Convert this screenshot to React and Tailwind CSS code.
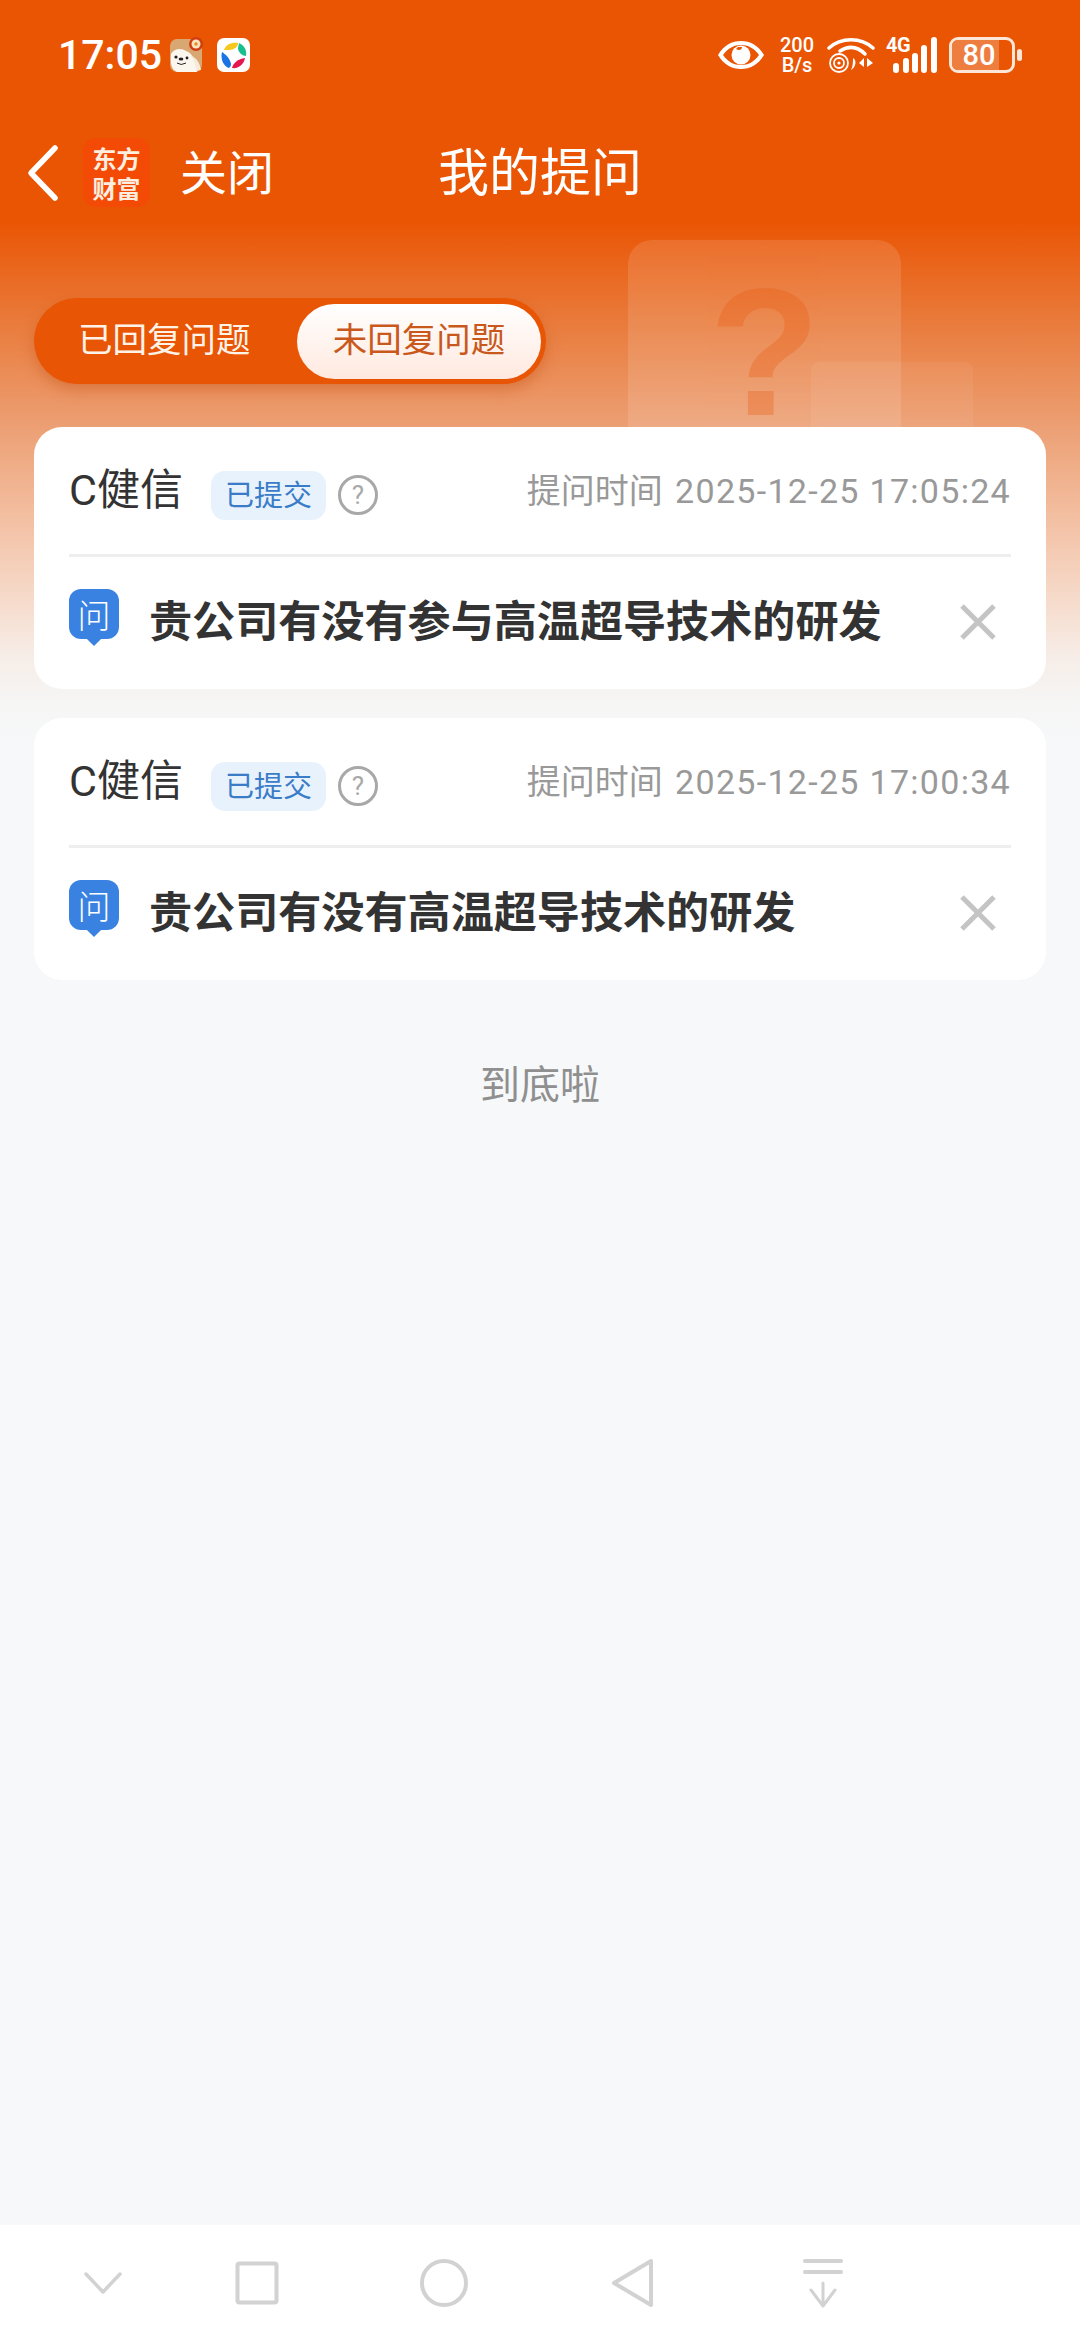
import React from "react";

const CJK = "font-['Roboto','Noto_Sans_CJK_SC',sans-serif]";

function DogIcon() {
  return (
    <svg width="36" height="36" viewBox="0 0 36 36" className="shrink-0">
      <rect x="1" y="2" width="32" height="33" rx="7" fill="#d9a772" />
      <path d="M2 17 C5 11 13 11 17 14 C22 15 27 22 28 35 L8 35 C3 33 1 28 2 17Z" fill="#fbf6ee" />
      <path d="M22 19 C27 20 31 26 32 33 L27 34 C27 28 25 23 22 19Z" fill="#f6ead9" />
      <circle cx="7" cy="20" r="1.6" fill="#222" />
      <circle cx="18" cy="21" r="1.4" fill="#222" />
      <ellipse cx="12" cy="22" rx="2.4" ry="1.5" fill="#222" />
      <path d="M8 26 Q12 29 17 26" stroke="#222" strokeWidth="1" fill="none" />
      <circle cx="27" cy="7" r="7" fill="#cf3f12" />
      <circle cx="27" cy="7" r="4.5" fill="#fbe3bd" />
      <circle cx="27" cy="7" r="1.7" fill="#e88a1f" />
    </svg>
  );
}

function ColorIcon() {
  return (
    <svg width="33" height="34" viewBox="0 0 33 34" className="shrink-0">
      <rect width="33" height="34" rx="7" fill="#fff" />
      <path d="M7 12 C9 6 15 4 21 5 C21 9 17 12 12 12 C10 12 8 12 7 12Z" fill="#f6c81e" />
      <path d="M22 5 C27 7 30 12 29 18 C25 18 21 14 21 10Z" fill="#19c08f" />
      <path d="M5 14 C8 16 13 20 14 26 C14 28 13 29 12 30 C7 29 3 21 5 14Z" fill="#1b74e4" />
      <path d="M15 30 C16 25 21 21 28 20 C27 26 22 31 15 30Z" fill="#e5174f" />
    </svg>
  );
}

function StatusBar() {
  return (
    <div className="flex h-[110px] items-center pl-[58px] pr-[58px] text-white">
      <span className={`${CJK} text-[41px] font-medium leading-none w-[111px]`}>17:05</span>
      <DogIcon />
      <div className="w-[12px]" />
      <ColorIcon />
      <div className="flex-1" />
      <svg width="46" height="30" viewBox="0 0 46 30" className="shrink-0 mr-[15px]">
        <path fillRule="evenodd" d="M0 15 C6 5 14 1 23 1 C32 1 40 5 46 15 C40 25 32 29 23 29 C14 29 6 25 0 15Z M5 15 C10 22 16 25 23 25 C30 25 36 22 41 15 C36 8 30 5 23 5 C16 5 10 8 5 15Z" fill="#fff" />
        <circle cx="23" cy="15" r="9.5" fill="#fff" />
        <path d="M18 9 C21 11 24 10 24 7 L20 7Z" fill="#ea5504" />
      </svg>
      <div className="flex flex-col items-center w-[36px] mr-[12px] font-['Roboto',sans-serif] text-[20px] leading-[20px] font-medium">
        <span>200</span>
        <span>B/s</span>
      </div>
      <svg width="48" height="36" viewBox="0 0 48 36" className="shrink-0 mr-[11px]">
        <path d="M2 11 C14 0 34 0 46 11" stroke="#fff" strokeWidth="3.5" fill="none" strokeLinecap="round" />
        <path d="M13 14 C21 9 30 9 38 17" stroke="#fff" strokeWidth="3.5" fill="none" strokeLinecap="round" />
        <circle cx="12" cy="26" r="9" stroke="#fff" strokeWidth="1.8" fill="none" />
        <circle cx="12" cy="26" r="5" stroke="#fff" strokeWidth="1.8" fill="none" />
        <circle cx="12" cy="26" r="1.6" fill="#fff" />
        <path d="M26 21 C30 23 29 30 24 33 C26 29 26 25 26 21Z" fill="#fff" />
        <path d="M37 21 L37 30 L32 26Z M40 21 L40 30 L46 26Z" fill="#fff" />
      </svg>
      <div className="relative w-[52px] h-[36px] mr-[11px] shrink-0">
        <span className="absolute left-0 top-[-2px] font-['Roboto',sans-serif] text-[20px] leading-[20px] font-bold tracking-[-0.5px]">4G</span>
        <svg width="46" height="36" viewBox="0 0 46 36" className="absolute left-[6px] top-0">
          <rect x="1" y="26" width="6" height="10" rx="3" fill="#fff" />
          <rect x="11" y="21" width="6" height="15" rx="3" fill="#fff" />
          <rect x="20" y="16" width="6" height="20" rx="3" fill="#fff" />
          <rect x="29" y="8" width="6" height="28" rx="3" fill="#fff" />
          <rect x="39" y="0" width="6" height="36" rx="3" fill="#fff" />
        </svg>
      </div>
      <div className="relative flex w-[66px] h-[36px] rounded-[9px] border-[3px] border-[#fbe6d8] overflow-hidden shrink-0">
        <div className="w-[47px] h-full bg-[#ee7e40]" />
        <span className="absolute inset-0 flex items-center justify-center pr-[6px] font-['Roboto',sans-serif] text-[29px] leading-none font-medium text-white">80</span>
      </div>
      <div className="w-[5px] h-[12px] rounded-[3px] bg-[#fbe6d8] ml-[2px] shrink-0" />
    </div>
  );
}

function NavBar() {
  return (
    <div className="relative flex h-[125px] items-center pl-[26px] text-white">
      <svg width="34" height="58" viewBox="0 0 34 58" className="shrink-0">
        <path d="M29 4 L5 29 L29 54" stroke="#fff" strokeWidth="5.5" fill="none" strokeLinecap="round" strokeLinejoin="round" />
      </svg>
      <div className="ml-[23px] w-[67px] h-[69px] rounded-[13px] bg-[#f34a05] flex flex-col items-center justify-center font-['Noto_Sans_CJK_SC',sans-serif] font-bold text-[24px] leading-[30px] text-[#fdeee0] shrink-0">
        <span>东方</span>
        <span>财富</span>
      </div>
      <span className="ml-[30px] mb-[6px] font-['Noto_Sans_CJK_SC',sans-serif] text-[47px] leading-none">关闭</span>
      <span className="absolute left-[400px] right-[400px] mb-[6px] text-center font-['Noto_Sans_CJK_SC',sans-serif] text-[51px] leading-none pointer-events-none">我的提问</span>
    </div>
  );
}

function Tabs() {
  return (
    <div className="mt-[63px] ml-[34px] w-[512px] h-[86px] rounded-full bg-[#e85504] flex items-center justify-between pl-[44px] pr-[5px] shadow-[0_6px_14px_rgba(190,70,10,0.35)] font-['Noto_Sans_CJK_SC',sans-serif] text-[34.5px]">
      <span className="mb-[7px] text-[#fff3e8] leading-none">已回复问题</span>
      <span className="w-[244px] h-[75px] pb-[7px] rounded-full bg-[linear-gradient(180deg,#ffffff,#ffe9df)] text-[#c9581c] flex items-center justify-center leading-none">未回复问题</span>
    </div>
  );
}

function Card({ time, q }) {
  return (
    <div className="relative mx-[34px] h-[262px] rounded-[28px] bg-white px-[35px]">
      <div className="flex h-[130px] items-center border-b-[3px] border-[#eeeeee]">
        <span className="font-['Roboto','Noto_Sans_CJK_SC',sans-serif] text-[43px] leading-none text-[#333333]">C健信</span>
        <span className="ml-[28px] mt-[9px] pb-[4px] w-[115px] h-[49px] rounded-[14px] bg-[#e8f2fc] text-[#3a7cc8] font-['Noto_Sans_CJK_SC',sans-serif] text-[29px] flex items-center justify-center leading-none">已提交</span>
        <span className="ml-[12px] mt-[8px] w-[40px] h-[40px] rounded-full border-[3px] border-[#a8a8a8] text-[#a8a8a8] flex items-center justify-center font-['Roboto',sans-serif] text-[26px] leading-none">?</span>
        <span className="ml-auto whitespace-nowrap font-['Roboto','Noto_Sans_CJK_SC',sans-serif] text-[34px] leading-none text-[#999999]">
          提问时间 <span className="ml-[4px] tracking-[1.3px]">{time}</span>
        </span>
      </div>
      <div className="flex h-[132px] items-center pb-[8px]">
        <div className="relative w-[50px] h-[50px] rounded-[12px] bg-[#3a82e2] flex items-center justify-center text-white font-['Noto_Sans_CJK_SC',sans-serif] font-light text-[33px] leading-none mt-[-10px] shrink-0">
          问
          <span className="absolute left-[20px] bottom-[-5px] w-[10px] h-[10px] rotate-45 bg-[#3a82e2]" />
        </div>
        <span className="ml-[30px] font-['Noto_Sans_CJK_SC',sans-serif] font-bold text-[43.1px] leading-none text-[#333333] whitespace-nowrap">{q}</span>
        <svg width="36" height="36" viewBox="0 0 36 36" className="ml-auto mr-[15px] mt-[5px] shrink-0">
          <path d="M2 2 L34 34 M34 2 L2 34" stroke="#c4c4c4" strokeWidth="5" />
        </svg>
      </div>
    </div>
  );
}

const G = "#d2d2d2";
function BottomBar() {
  return (
    <div className="mt-auto h-[115px] bg-white flex items-center pl-[84px]">
      <svg width="38" height="24" viewBox="0 0 38 24" className="shrink-0">
        <path d="M2 3 L19 21 L36 3" stroke={G} strokeWidth="3.5" fill="none" strokeLinecap="round" strokeLinejoin="round" />
      </svg>
      <svg width="44" height="44" viewBox="0 0 44 44" className="ml-[113px] shrink-0">
        <rect x="2.5" y="2.5" width="39" height="39" rx="2" stroke={G} strokeWidth="4" fill="none" />
      </svg>
      <svg width="48" height="48" viewBox="0 0 48 48" className="ml-[141px] shrink-0">
        <circle cx="24" cy="24" r="22" stroke={G} strokeWidth="4" fill="none" />
      </svg>
      <svg width="44" height="50" viewBox="0 0 44 50" className="ml-[143px] shrink-0">
        <path d="M40 3 L3 25 L40 47Z" stroke={G} strokeWidth="4" fill="none" strokeLinejoin="round" />
      </svg>
      <svg width="42" height="50" viewBox="0 0 42 50" className="ml-[147px] shrink-0">
        <rect x="1" y="1" width="40" height="4" rx="2" fill={G} />
        <rect x="1" y="12" width="40" height="4" rx="2" fill={G} />
        <path d="M21 25 L21 47 M9 32 L21 48 L33 32" stroke={G} strokeWidth="3" fill="none" strokeLinecap="round" strokeLinejoin="round" />
      </svg>
    </div>
  );
}

export default function App() {
  return (
    <div className="relative w-[1080px] h-[2340px] overflow-hidden flex flex-col bg-[linear-gradient(180deg,#ea5504_0px,#ea5504_222px,#e97a3a_320px,#ec9d70_420px,#f3c0a3_520px,#f6dccd_603px,#f6ece6_653px,#f6f6f5_703px,#f7f8fa_745px)]">
      <div className="absolute left-[628px] top-[240px] w-[273px] h-[260px] rounded-[24px] bg-[rgba(255,255,255,0.12)] flex justify-center overflow-hidden">
        <span className="font-['Liberation_Sans',sans-serif] font-bold text-[182px] leading-none mt-[21px] text-[#e8570a] opacity-30">?</span>
      </div>
      <div className="absolute left-[811px] top-[362px] w-[162px] h-[100px] rounded-[8px] bg-[rgba(255,255,255,0.06)]" />
      <div className="relative flex-1 flex flex-col">
        <StatusBar />
        <NavBar />
        <Tabs />
        <div className="mt-[43px] flex flex-col gap-[29px]">
          <Card time="2025-12-25 17:05:24" q="贵公司有没有参与高温超导技术的研发" />
          <Card time="2025-12-25 17:00:34" q="贵公司有没有高温超导技术的研发" />
        </div>
        <div className="mt-[82px] text-center font-['Noto_Sans_CJK_SC',sans-serif] text-[40px] leading-none text-[#8f8f8f]">到底啦</div>
        <BottomBar />
      </div>
    </div>
  );
}
